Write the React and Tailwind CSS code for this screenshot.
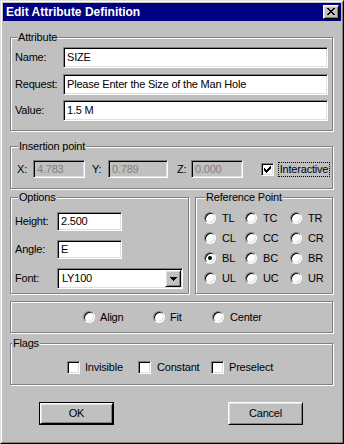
const ui = "font-['Liberation_Sans',Arial,sans-serif] text-[11px] tracking-[-0.2px] leading-[13px] text-black";

const sunken =
  'border border-t-[#808080] border-l-[#808080] border-r-white border-b-white shadow-[inset_1px_1px_0_#000,inset_-1px_-1px_0_#dfdfdf]';
const raised =
  'border border-t-white border-l-white border-r-black border-b-black shadow-[inset_1px_1px_0_#dfdfdf,inset_-1px_-1px_0_#808080]';

function Group({ title, legend, className, children }) {
  return (
    <div className={`relative border border-[#808080] shadow-[1px_1px_0_#fff,inset_1px_1px_0_#fff] ${className}`}>
      {title && (
        <span className={`absolute top-[-7px] ${legend} bg-[#c0c0c0] px-[1px] whitespace-nowrap`}>{title}</span>
      )}
      {children}
    </div>
  );
}

function Field({ value, className, disabled }) {
  return (
    <div
      className={`${sunken} flex items-center pl-[3px] whitespace-nowrap ${
        disabled ? 'bg-[#c0c0c0] text-[#808080]' : 'bg-white'
      } ${className}`}
    >
      {value}
    </div>
  );
}

function Radio({ checked }) {
  return (
    <div
      className="flex h-[12px] w-[12px] shrink-0 items-center justify-center rounded-full border border-t-[#808080] border-l-[#808080] border-r-white border-b-white bg-white shadow-[inset_1px_1px_0_#000,inset_-1px_-1px_0_#dfdfdf]"
    >
      {checked && <div className="h-[4px] w-[4px] rounded-full bg-black" />}
    </div>
  );
}

function Check({ checked }) {
  return (
    <div className={`${sunken} flex h-[13px] w-[13px] shrink-0 items-center justify-center bg-white`}>
      {checked && (
        <svg width="7" height="7" viewBox="0 0 7 7" shapeRendering="crispEdges">
          <path
            d="M6 0h1v1H6z M5 1h2v1H5z M0 2h1v1H0z M4 2h3v1H4z M0 3h2v1H0z M3 3h3v1H3z M0 4h5v1H0z M1 5h3v1H1z M2 6h1v1H2z"
            fill="#000"
          />
        </svg>
      )}
    </div>
  );
}

function Button({ children, isDefault }) {
  const inner = (
    <div className={`${raised} flex h-full w-full items-center justify-center bg-[#c0c0c0]`}>{children}</div>
  );
  if (isDefault) {
    return <div className="h-[23px] w-[75px] border border-black">{inner}</div>;
  }
  return <div className="h-[23px] w-[75px]">{inner}</div>;
}

const refPoints = [
  ['TL', 'TC', 'TR'],
  ['CL', 'CC', 'CR'],
  ['BL', 'BC', 'BR'],
  ['UL', 'UC', 'UR']
];

export default function App() {
  return (
    <div className={`h-[444px] w-[344px] border border-t-[#dfdfdf] border-l-[#dfdfdf] border-r-black border-b-black bg-[#c0c0c0] ${ui}`}>
      <div className="h-full w-full border border-t-white border-l-white border-r-[#808080] border-b-[#808080] p-[1px]">
        {/* title bar */}
        <div className="flex h-[18px] items-center justify-between bg-[#000080] pl-[3px] pr-[2px]">
          <span className="text-[12px] font-bold tracking-normal text-white">Edit Attribute Definition</span>
          <div className={`${raised} h-[14px] w-[16px] bg-[#c0c0c0] pl-[3px] pt-[2px]`}>
            <svg width="8" height="7" viewBox="0 0 8 7" shapeRendering="crispEdges" className="block">
              <path
                d="M0 0h2v1H0z M6 0h2v1H6z M1 1h2v1H1z M5 1h2v1H5z M2 2h4v1H2z M3 3h2v1H3z M2 4h4v1H2z M1 5h2v1H1z M5 5h2v1H5z M0 6h2v1H0z M6 6h2v1H6z"
                fill="#000"
              />
            </svg>
          </div>
        </div>

        <div className="pl-[7px] pr-[8px]">
          {/* Attribute */}
          <Group title="Attribute" legend="left-[6px]" className="mt-[16px] h-[94px] pl-[4px] pt-[9px]">
            <div className="flex h-[21px] items-center">
              <span className="w-[48px]">Name:</span>
              <Field value="SIZE" className="h-[21px] w-[265px]" />
            </div>
            <div className="mt-[6px] flex h-[21px] items-center">
              <span className="w-[48px]">Request:</span>
              <Field value="Please Enter the Size of the Man Hole" className="h-[21px] w-[265px]" />
            </div>
            <div className="mt-[5px] flex h-[21px] items-center">
              <span className="w-[48px]">Value:</span>
              <Field value="1.5 M" className="h-[21px] w-[265px]" />
            </div>
          </Group>

          {/* Insertion point */}
          <Group title="Insertion point" legend="left-[7px]" className="mt-[15px] h-[43px] pl-[6px] pt-[13px]">
            <div className="flex h-[18px] items-center">
              <span className="w-[16px]">X:</span>
              <Field value="4.783" disabled className="h-[18px] w-[52px]" />
              <span className="ml-[7px] w-[16px]">Y:</span>
              <Field value="0.789" disabled className="h-[18px] w-[60px]" />
              <span className="ml-[9px] w-[14px]">Z:</span>
              <Field value="0.000" disabled className="h-[18px] w-[52px]" />
              <div className="ml-[18px]">
                <Check checked />
              </div>
              <span className="ml-[4px] flex h-[15px] w-[52px] items-center justify-center border border-dotted border-black">
                Interactive
              </span>
            </div>
          </Group>

          {/* Options + Reference Point */}
          <div className="mt-[8px] flex gap-[6px]">
            <Group title="Options" legend="left-[7px]" className="h-[97px] w-[179px] pl-[4px] pt-[14px]">
              <div className="flex h-[19px] items-center">
                <span className="w-[42px]">Height:</span>
                <Field value="2.500" className="h-[19px] w-[65px]" />
              </div>
              <div className="mt-[9px] flex h-[19px] items-center">
                <span className="w-[42px]">Angle:</span>
                <Field value="E" className="h-[19px] w-[65px]" />
              </div>
              <div className="mt-[9px] flex h-[21px] items-center">
                <span className="w-[42px]">Font:</span>
                <div className={`${sunken} flex h-[21px] w-[126px] items-center bg-white p-[1px]`}>
                  <span className="flex-1 pl-[3px]">LY100</span>
                  <div className={`${raised} flex h-full w-[16px] items-center justify-center bg-[#c0c0c0]`}>
                    <svg width="7" height="4" viewBox="0 0 7 4" shapeRendering="crispEdges">
                      <path d="M0 0h7v1H0z M1 1h5v1H1z M2 2h3v1H2z M3 3h1v1H3z" fill="#000" />
                    </svg>
                  </div>
                </div>
              </div>
            </Group>

            <Group title="Reference Point" legend="left-[9px]" className="h-[97px] flex-1 pl-[8px] pt-[14px]">
              <div className="grid grid-cols-[41px_45px_1fr] gap-y-[8px]">
                {refPoints.flat().map((p) => (
                  <div key={p} className="flex h-[12px] items-center">
                    <Radio checked={p === 'BL'} />
                    <span className="ml-[6px]">{p}</span>
                  </div>
                ))}
              </div>
            </Group>
          </div>

          {/* Align / Fit / Center */}
          <Group className="mt-[7px] flex h-[32px] items-center pl-[72px]">
            <div className="flex w-[70px] items-center">
              <Radio />
              <span className="ml-[5px]">Align</span>
            </div>
            <div className="flex w-[59px] items-center">
              <Radio />
              <span className="ml-[5px]">Fit</span>
            </div>
            <div className="flex items-center">
              <Radio />
              <span className="ml-[6px]">Center</span>
            </div>
          </Group>

          {/* Flags */}
          <Group title="Flags" legend="left-[1px]" className="mt-[10px] flex h-[42px] pl-[56px] pt-[17px]">
            <div className="flex h-[13px] w-[71px] items-center">
              <Check />
              <span className="ml-[5px]">Invisible</span>
            </div>
            <div className="flex h-[13px] w-[73px] items-center">
              <Check />
              <span className="ml-[6px]">Constant</span>
            </div>
            <div className="flex h-[13px] items-center">
              <Check />
              <span className="ml-[5px]">Preselect</span>
            </div>
          </Group>

          {/* buttons */}
          <div className="mt-[17px] flex">
            <div className="ml-[29px]">
              <Button isDefault>OK</Button>
            </div>
            <div className="ml-[114px]">
              <Button>Cancel</Button>
            </div>
          </div>
        </div>
      </div>
    </div>
  );
}
